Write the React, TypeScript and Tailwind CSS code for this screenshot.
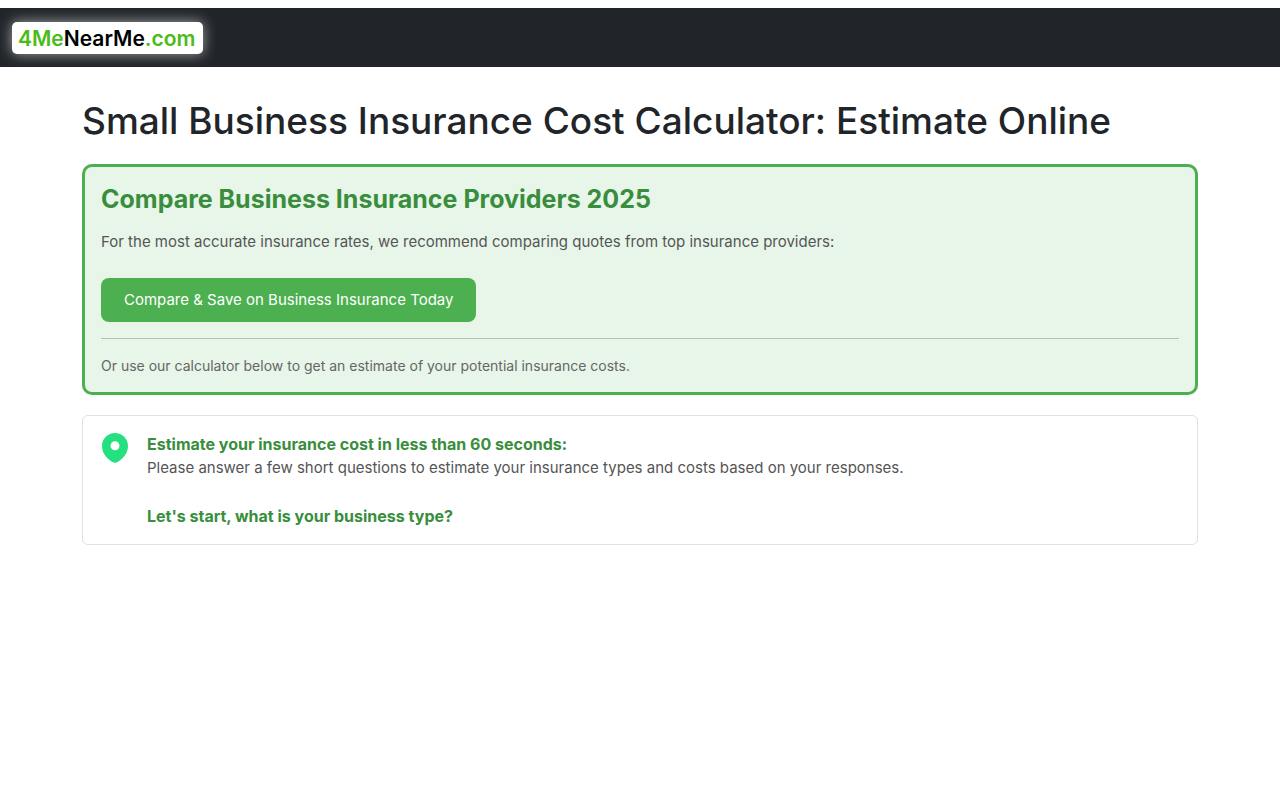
import React, { FC } from 'react'

const Header: FC = () => (
  <header className="mt-2 flex h-[59px] items-center bg-[#212529] px-3">
    <a
      href="/"
      className="flex h-8 items-center rounded-[5px] bg-white pt-0.5 pr-2 pl-1.5 text-[21px] font-semibold text-black shadow-[0_0_14px_rgba(255,255,255,0.6)]"
    >
      <span className="text-[#4cbb17]">4Me</span>NearMe<span className="text-[#4cbb17]">.com</span>
    </a>
  </header>
)

const PinIcon: FC = () => (
  <svg width="28" height="32" viewBox="-1 -1 28 32" className="mr-4 shrink-0" aria-hidden="true">
    <path
      fillRule="evenodd"
      fill="#25e07e"
      d="M13 0C5.800 0 0 5.700 0 12.900 0 20.500 5.500 26.500 11.800 29.600Q13 30.300 14.200 29.600C20.500 26.500 26 20.500 26 12.900 26 5.700 20.200 0 13 0Zm0 8.300a4.500 4.500 0 1 1 0 9 4.500 4.500 0 0 1 0-9Z"
    />
  </svg>
)

const ComparePanel: FC = () => (
  <section className="mb-5 rounded-[10px] border-3 border-[#4caf50] bg-[#e8f5e9] p-4">
    <h2 className="mb-[15px] text-[25px] leading-8 font-bold text-[#388e3c]">
      Compare Business Insurance Providers 2025
    </h2>
    <p className="mb-6 text-[15px] leading-6 text-[#555]">
      For the most accurate insurance rates, we recommend comparing quotes from top insurance
      providers:
    </p>
    <button className="h-11 rounded-lg bg-[#4caf50] px-[23px] text-[15px] text-white">
      Compare &amp; Save on Business Insurance Today
    </button>
    <hr className="my-4 border-[#b3c1b6]" />
    <p className="text-sm leading-[21px] text-[#666]">
      Or use our calculator below to get an estimate of your potential insurance costs.
    </p>
  </section>
)

const Estimate: FC = () => (
  <section className="flex items-start rounded-md border border-[#dee2e6] py-4 pr-4 pl-[18px]">
    <PinIcon />
    <div className="pl-0.5">
      <p className="font-bold text-[#388e3c]">Estimate your insurance cost in less than 60 seconds:</p>
      <p className="mb-6 text-[15px] leading-6 text-[#555]">
        Please answer a few short questions to estimate your insurance types and costs based on your
        responses.
      </p>
      <p className="font-bold text-[#388e3c]">Let&apos;s start, what is your business type?</p>
    </div>
  </section>
)

const App: FC = () => (
  <div className="font-['Inter','Liberation_Sans',sans-serif] text-base text-[#212529]">
    <Header />
    <main className="mx-auto max-w-[1140px] px-3 pt-[30px]">
      <h1 className="mb-[19px] text-[37px] leading-[48px] font-medium">
        Small Business Insurance Cost Calculator: Estimate Online
      </h1>
      <ComparePanel />
      <Estimate />
    </main>
  </div>
)

export default App
